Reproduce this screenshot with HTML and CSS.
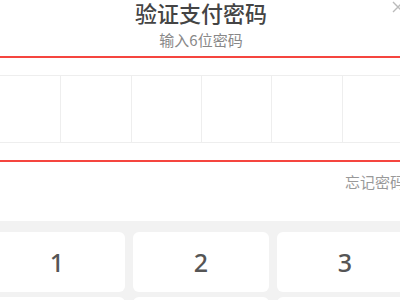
FILE: index.html
```html
<!DOCTYPE html>
<html lang="zh-CN">
<head>
<meta charset="UTF-8" />
<meta name="viewport" content="width=device-width, initial-scale=1" />
<title>验证支付密码</title>
<link rel="stylesheet" href="styles.css">
</head>
<body>

<div class="sheet">
  <div class="head">
    <h1>验证支付密码</h1>
    <p>输入6位密码</p>
    <span class="close">
      <svg width="12" height="12" viewBox="0 0 12 12"><path d="M1 1L11 11M11 1L1 11" stroke="#bbb" stroke-width="1.4" fill="none"/></svg>
    </span>
  </div>

  <div class="pwd">
    <div class="pwd-grid">
      <div class="cell"></div>
      <div class="cell"></div>
      <div class="cell"></div>
      <div class="cell"></div>
      <div class="cell"></div>
      <div class="cell"></div>
    </div>
  </div>

  <div class="forget">忘记密码</div>

  <div class="keypad">
    <button class="key">1</button>
    <button class="key">2</button>
    <button class="key">3</button>
    <button class="key">4</button>
    <button class="key">5</button>
    <button class="key">6</button>
  </div>
</div>

</body>
</html>
```

FILE: styles.css
```css
body {
  margin: 0;
  background: #fff;
  font-family: "Noto Sans CJK SC", "Noto Sans", sans-serif;
  overflow: hidden;
  width: 400px;
  height: 300px;
}

.sheet {
  width: 440px;
  margin-left: -19px;
}

.head {
  position: relative;
  height: 56px;
  border-bottom: 2px solid #f5453f;
  text-align: center;
}

.head h1 {
  margin: 0;
  font-size: 22px;
  line-height: 24px;
  font-weight: 500;
  color: #444;
}

.head p {
  margin: 6px 0 0;
  font-size: 15px;
  line-height: 20px;
  color: #888;
}

.close {
  position: absolute;
  top: 1px;
  right: 17px;
  line-height: 0;
}

.pwd {
  padding: 17px 8px;
  border-bottom: 2px solid #f5453f;
}

.pwd-grid {
  display: grid;
  grid-template-columns: repeat(6, 1fr);
  height: 66px;
  border: 1px solid #eee;
}

.cell {
  border-left: 1px solid #eee;
}

.cell:first-child {
  border-left: none;
}

.forget {
  height: 59px;
  box-sizing: border-box;
  padding: 10px 16px 0 0;
  text-align: right;
  font-size: 15px;
  line-height: 20px;
  color: #999;
}

.keypad {
  background: #f2f2f2;
  padding: 11px 8px;
  display: grid;
  grid-template-columns: repeat(3, 1fr);
  gap: 5px 8px;
}

.key {
  height: 60px;
  border: none;
  border-radius: 6px;
  background: #fff;
  font-family: "Noto Sans", sans-serif;
  font-size: 25px;
  font-weight: 500;
  color: #555;
  padding: 0;
}
```
